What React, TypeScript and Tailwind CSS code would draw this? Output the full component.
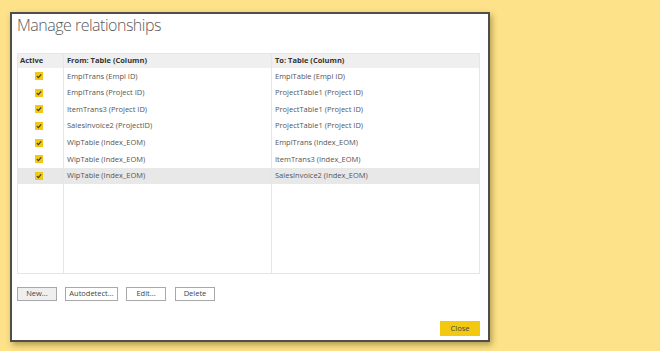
import React from "react";

const rows = [
  ["EmplTrans (Empl ID)", "EmplTable (Empl ID)"],
  ["EmplTrans (Project ID)", "ProjectTable1 (Project ID)"],
  ["ItemTrans3 (Project ID)", "ProjectTable1 (Project ID)"],
  ["SalesInvoice2 (ProjectID)", "ProjectTable1 (Project ID)"],
  ["WipTable (Index_EOM)", "EmplTrans (Index_EOM)"],
  ["WipTable (Index_EOM)", "ItemTrans3 (Index_EOM)"],
  ["WipTable (Index_EOM)", "SalesInvoice2 (Index_EOM)"],
];

function Check() {
  return (
    <span className="flex h-[8px] w-[8px] items-center justify-center bg-[#F2C811]">
      <svg width="6" height="6" viewBox="0 0 6 6">
        <path d="M0.8 3.1 L2.4 4.6 L5.2 1.4" fill="none" stroke="#3a3a3a" strokeWidth="1.2" />
      </svg>
    </span>
  );
}

function Btn({ label, gray }: { label: string; gray?: boolean }) {
  return (
    <div
      className={
        "flex h-[14px] items-center justify-center border border-[#a8a8a8] text-[7.5px] text-[#444] " +
        (gray ? "bg-[#efefef]" : "bg-white")
      }
    >
      {label}
    </div>
  );
}

export default function App() {
  return (
    <div
      className="h-[351px] w-[660px] overflow-hidden bg-[#FDE28A] pl-[10px] pt-[12px]"
      style={{ fontFamily: '"Open Sans", "Noto Sans", sans-serif' }}
    >
      <div className="flex h-[330px] w-[480px] flex-col border-2 border-[#4e4e4e] bg-white pl-[5px] pr-[7px] shadow-[2px_3px_6px_rgba(90,70,0,0.45)]">
        <div className="mt-[-1px] h-[40px] text-[16px] font-light leading-[24px] tracking-[-0.5px] text-[#5a5a5a]">
          Manage relationships
        </div>
        <div className="flex h-[221px] w-[463px] border border-[#e6e6e6] text-[7.5px]">
          <div className="flex w-[46px] flex-col border-r border-[#e6e6e6]">
            <div className="flex h-[14px] items-center bg-[#efefef] pl-[2px] font-bold text-[#333]">Active</div>
            {rows.map((r, i) => (
              <div
                key={i}
                className={"flex h-[16.6px] items-center pl-[17px] " + (i === 6 ? "bg-[#e8e8e8]" : "")}
              >
                <Check />
              </div>
            ))}
          </div>
          <div className="flex w-[208px] flex-col border-r border-[#e6e6e6]">
            <div className="flex h-[14px] items-center bg-[#efefef] pl-[3px] font-bold text-[#333]">From: Table (Column)</div>
            {rows.map((r, i) => (
              <div
                key={i}
                className={"flex h-[16.6px] items-center pl-[3px] text-[#555] " + (i === 6 ? "bg-[#e8e8e8]" : "")}
              >
                {r[0]}
              </div>
            ))}
          </div>
          <div className="flex flex-1 flex-col">
            <div className="flex h-[14px] items-center bg-[#efefef] pl-[3px] font-bold text-[#333]">To: Table (Column)</div>
            {rows.map((r, i) => (
              <div
                key={i}
                className={"flex h-[16.6px] items-center pl-[3px] text-[#555] " + (i === 6 ? "bg-[#e8e8e8]" : "")}
              >
                {r[1]}
              </div>
            ))}
          </div>
        </div>
        <div className="mt-[13px] flex gap-[8px]">
          <div className="w-[40px]"><Btn label="New..." gray /></div>
          <div className="w-[53px]"><Btn label="Autodetect..." /></div>
          <div className="w-[40px]"><Btn label="Edit..." /></div>
          <div className="ml-[1px] w-[40px]"><Btn label="Delete" /></div>
        </div>
        <div className="mt-[20px] flex w-[463px] justify-end">
          <div className="flex h-[15px] w-[40px] items-center justify-center bg-[#F2C811] text-[7.5px] text-[#444]">
            Close
          </div>
        </div>
      </div>
    </div>
  );
}
